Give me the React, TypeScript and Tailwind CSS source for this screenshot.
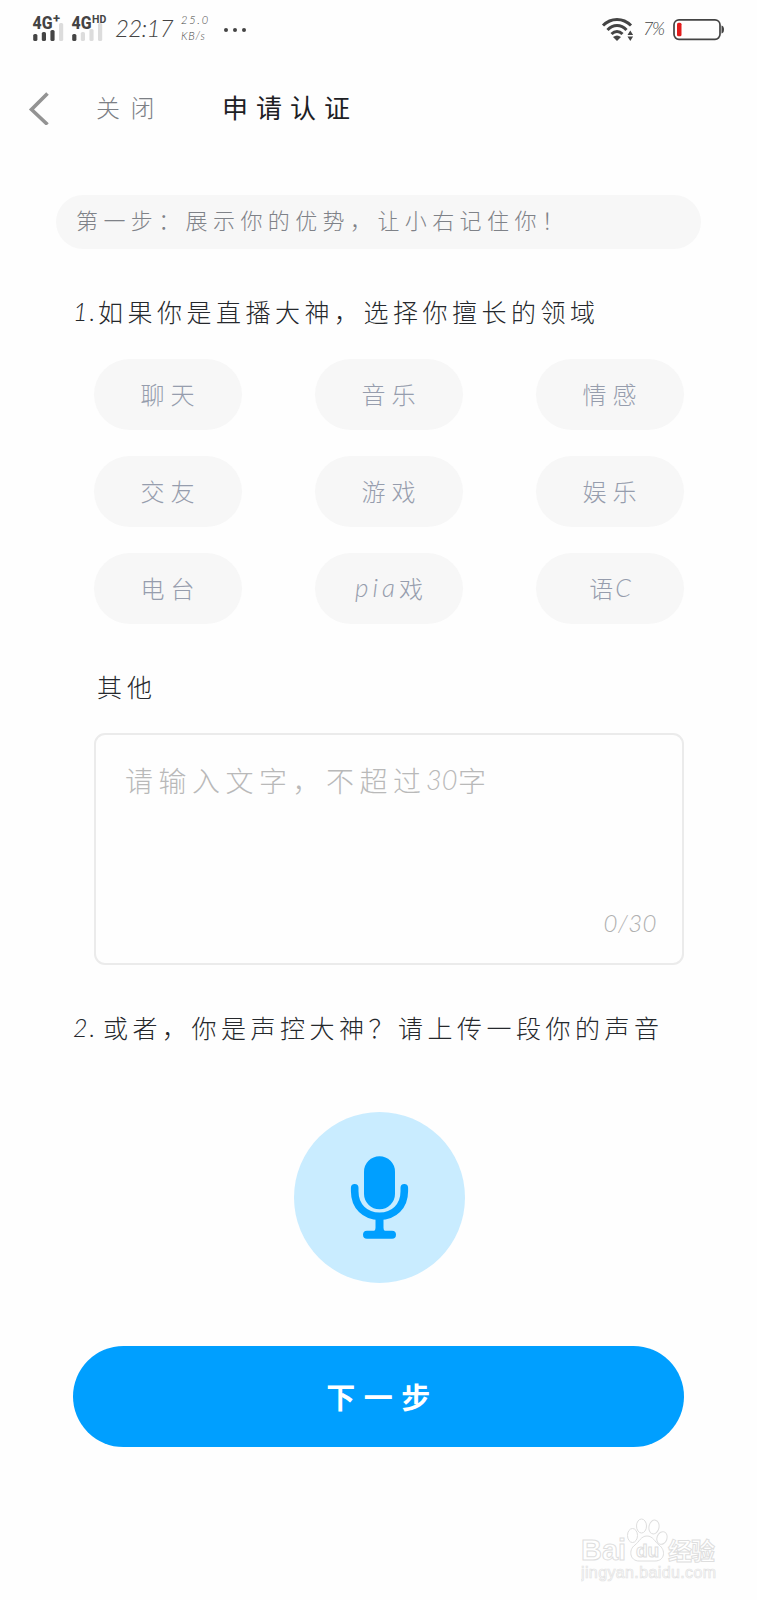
import React, { useState } from "react";

const TAGS = ["聊天", "音乐", "情感", "交友", "游戏", "娱乐", "电台", "pia戏", "语C"];

const MAX_LENGTH = 30;

interface SignalProps {
  label: string;
  suffix: string;
  suffixSize: number;
  bars: number;
  width: number;
}

function Signal({ label, suffix, suffixSize, bars, width }: SignalProps) {
  const activeHeights = [7, 9, 11, 18];
  const idleHeights = [7, 9, 12, 18];
  return (
    <svg width={width} height="34" viewBox={`0 -6 ${width} 34`} className="-mt-1 shrink-0">
      {activeHeights.map((full, i) => {
        const active = i < bars;
        const h = active ? full : idleHeights[i];
        return (
          <rect
            key={i}
            x={1.2 + i * 8.6}
            y={27 - h}
            width="4.2"
            height={h}
            rx="1.6"
            fill={active ? "#444" : "#dcdcdc"}
          />
        );
      })}
      <text x="0.5" y="14.5" fontSize="17.5" fontWeight="800" fill="#444" textLength="20" lengthAdjust="spacingAndGlyphs">
        {label}
      </text>
      <text x="21" y="8.5" fontSize={suffixSize} fontWeight="700" fill="#444">
        {suffix}
      </text>
    </svg>
  );
}

function StatusBar() {
  return (
    <div className="flex h-14 items-start justify-between pl-8 pr-8 pt-3 font-['Roboto','Liberation_Sans',sans-serif] text-[#444]">
      <div className="flex items-start">
        <Signal label="4G" suffix="+" suffixSize={13} bars={3} width={39} />
        <Signal label="4G" suffix="HD" suffixSize={10.5} bars={1} width={44} />
        <span className="w-[66px] pt-0.5 font-['Lato'] text-[24px] font-light italic leading-[28px] tracking-[-0.7px]">
          22:17
        </span>
        <div className="w-[43px] pt-0.5 font-['Lato'] text-[11px] font-light italic">
          <div className="leading-[11px] tracking-[1.8px]">25.0</div>
          <div className="mt-[5px] leading-[11px] tracking-[0.8px]">KB/s</div>
        </div>
        <div className="flex gap-[5px] pt-4">
          <i className="size-1 rounded-full bg-[#444]" />
          <i className="size-1 rounded-full bg-[#444]" />
          <i className="size-1 rounded-full bg-[#444]" />
        </div>
      </div>

      <div className="flex items-start pt-0.5">
        <svg width="34" height="28" viewBox="0 0 34 28" fill="none" stroke="#444" strokeWidth="3">
          <path d="M2 11.5C10 3.5 22 3.5 30 11.5" />
          <path d="M6.5 16C12 10 20 10 25.5 16" />
          <path d="M10.5 20C14 16.5 18 16.5 21.5 20" />
          <path d="M12 23q4-3 8 0l-4 4z" fill="#444" stroke="none" />
          <path d="M26.5 21l2.8-4.5 2.8 4.5zM26.5 22.5l2.8 4.5 2.8-4.5z" fill="#444" stroke="none" />
        </svg>
        <span className="ml-2 w-[30px] font-['Lato'] text-[18px] font-light italic leading-[28px] tracking-[-1.5px]">
          7%
        </span>
        <svg width="52" height="28" viewBox="0 0 52 28">
          <rect x="1" y="5.8" width="46" height="19.5" rx="5" fill="none" stroke="#444" strokeWidth="1.7" />
          <rect x="4" y="8.8" width="4.5" height="13.5" rx="1.5" fill="#e21b1b" />
          <path d="M48.5 11.5q2.5.5 2.5 4t-2.5 4z" fill="#444" />
        </svg>
      </div>
    </div>
  );
}

function MicIcon() {
  return (
    <svg width="60" height="86" viewBox="0.5 0.2 60 86" fill="#009fff">
      <rect x="14.5" y="1.5" width="31" height="53" rx="15.5" />
      <path
        d="M5.2 33V36.5C5.2 51.5 15.5 61.5 30 61.5S54.8 51.5 54.8 36.5V33"
        fill="none"
        stroke="#009fff"
        strokeWidth="7.6"
        strokeLinecap="round"
      />
      <path d="M26 64h8v9q0 4 4 4H22q4 0 4-4z" />
      <rect x="13.5" y="76" width="33" height="8" rx="4" />
    </svg>
  );
}

function Watermark() {
  return (
    <svg width="140" height="70" viewBox="0 0 140 70" className="font-['Liberation_Sans','Noto_Sans_CJK_SC',sans-serif]">
      <g fill="#fff" stroke="#dedede" strokeWidth="1">
        <text x="0" y="46" fontSize="29" fontWeight="700" textLength="45" lengthAdjust="spacingAndGlyphs">
          Bai
        </text>
        <path d="M66 22c-6 0-8 6-12 9-7 5-5 16 4 16h16c10 0 11-11 4-16-4-3-6-9-12-9z" />
        <ellipse cx="51.5" cy="21.5" rx="5" ry="7" />
        <ellipse cx="60.5" cy="12" rx="5" ry="7" />
        <ellipse cx="73" cy="13" rx="5" ry="7" transform="rotate(12 73 13)" />
        <ellipse cx="81" cy="24" rx="5" ry="6.5" transform="rotate(20 81 24)" />
        <text x="55" y="43" fontSize="19" fontWeight="700">du</text>
        <text x="87" y="46" fontSize="24" fontWeight="700" textLength="47">经验</text>
      </g>
      <text x="0" y="64" fontSize="16" fill="#fff" stroke="#e2e2e2" strokeWidth="0.7" textLength="135">
        jingyan.baidu.com
      </text>
    </svg>
  );
}

export default function App() {
  const [selected, setSelected] = useState<string[]>([]);
  const [text, setText] = useState("");

  const toggle = (tag: string) => {
    setSelected((prev) =>
      prev.includes(tag) ? prev.filter((t) => t !== tag) : [...prev, tag]
    );
  };

  return (
    <div className="flex h-[1600px] w-[757px] flex-col overflow-hidden bg-[#fefefe] font-['Noto_Sans_CJK_SC',sans-serif] font-light">
      <StatusBar />

      {/* Nav bar */}
      <header className="flex h-[104px] items-center pl-7">
        <svg width="22" height="34" viewBox="0 0 22 34" fill="none" stroke="#939393" strokeWidth="3.6">
          <path d="M19.5 2.5L3.5 18.5L19.5 33.5" />
        </svg>
        <span className="ml-[46px] w-[126px] pb-0.5 text-[24px] tracking-[10.5px] text-[#7c7f85]">关闭</span>
        <h1 className="pb-1 text-[26px] font-normal tracking-[8px] text-[#1d2024]">申请认证</h1>
      </header>

      {/* Step hint */}
      <div className="ml-14 mt-[35px] flex h-[54px] w-[645px] items-center rounded-full bg-[#f7f7f7] pb-[5px] pl-5 text-[22px] tracking-[5.4px] text-[#7f8288]">
        第一步：展示你的优势，让小右记住你！
      </div>

      <h2 className="ml-[73px] mt-[43px] flex h-10 items-center whitespace-nowrap text-[25px] tracking-[4.5px] text-[#25282c]">
        <span className="w-[25px] font-['Lato'] italic tracking-[2px]">1.</span>
        如果你是直播大神，选择你擅长的领域
      </h2>

      <div className="ml-[94px] mt-[27px] grid w-[590px] grid-cols-[148px_148px_148px] justify-between gap-y-[26px]">
        {TAGS.map((tag) => (
          <button
            key={tag}
            onClick={() => toggle(tag)}
            className={`flex h-[71px] items-center justify-center rounded-full pb-0.5 text-[24px] ${
              selected.includes(tag) ? "bg-[#c9ecff] text-[#009fff]" : "bg-[#f7f7f7] text-[#969dad]"
            }`}
          >
            {tag.startsWith("pia") ? (
              <>
                <span className="font-['Lato'] text-[26px] italic tracking-[4px]">pia</span>戏
              </>
            ) : tag.endsWith("C") ? (
              <>
                语<span className="ml-0.5 font-['Lato'] text-[25px] italic">C</span>
              </>
            ) : (
              <span className="-mr-[5px] tracking-[6px]">{tag}</span>
            )}
          </button>
        ))}
      </div>

      <h3 className="ml-[97px] mt-[43px] flex h-10 items-center text-[25px] tracking-[5px] text-[#25282c]">其他</h3>

      <label className="ml-[94px] mt-[26px] flex h-[232px] w-[590px] flex-col justify-between rounded-[11px] border-2 border-[#ebebeb] pb-[20px] pl-[29px] pr-[25px] pt-[25px]">
        <div className="relative h-10">
          {text === "" && (
            <span className="absolute inset-0 flex items-center text-[28px] tracking-[5.5px] text-[#b9b9b9]">
              <span className="w-[301px] whitespace-nowrap">请输入文字，不超过</span>
              <span className="w-[32px] font-['Lato'] text-[27px] italic tracking-[0px]">30</span>
              <span>字</span>
            </span>
          )}
          <textarea
            value={text}
            maxLength={MAX_LENGTH}
            onChange={(e) => setText(e.target.value)}
            className="h-full w-full resize-none bg-transparent text-[28px] leading-10 text-[#444] outline-none"
          />
        </div>
        <span className="self-end font-['Lato'] text-[24px] italic leading-[40px] tracking-[0.5px] text-[#b0b0b0]">
          {text.length}/{MAX_LENGTH}
        </span>
      </label>

      <h2 className="ml-[73px] mt-[43px] flex h-10 items-center whitespace-nowrap text-[25px] tracking-[4.5px] text-[#25282c]">
        <span className="w-[30px] font-['Lato'] italic tracking-[2px]">2.</span>
        或者，你是声控大神？请上传一段你的声音
      </h2>

      <button className="ml-[294px] mt-16 flex size-[171px] shrink-0 items-center justify-center rounded-full bg-[#c9ecff]">
        <MicIcon />
      </button>

      <button className="ml-[73px] mt-[63px] flex h-[101px] w-[611px] shrink-0 items-center justify-center rounded-full bg-[#009fff] pl-2 text-[29px] font-bold tracking-[8.5px] text-white">
        下一步
      </button>

      <div className="ml-[581px] mt-[67px]">
        <Watermark />
      </div>
    </div>
  );
}
